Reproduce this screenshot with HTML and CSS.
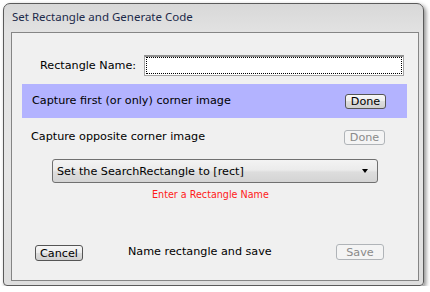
FILE: index.html
```html
<!DOCTYPE html>
<html lang="en">
<head>
    <meta charset="UTF-8">
    <title>Set Rectangle and Generate Code</title>
    <link rel="stylesheet" href="styles.css">
</head>
<body>
    <div class="window">
        <div class="title-bar">Set Rectangle and Generate Code</div>

        <div class="panel">
            <div class="name-row">
                <label for="rect-name">Rectangle Name:</label>
                <input type="text" id="rect-name" class="name-input">
            </div>

            <div class="step-row current">
                <span>Capture first (or only) corner image</span>
                <button class="btn">Done</button>
            </div>

            <div class="step-row">
                <span>Capture opposite corner image</span>
                <button class="btn" disabled>Done</button>
            </div>

            <div class="combo">
                <span>Set the SearchRectangle to [rect]</span>
                <span class="combo-arrow"></span>
            </div>

            <div class="error-msg">Enter a Rectangle Name</div>

            <div class="bottom-row">
                <button class="btn cancel-btn">Cancel</button>
                <span class="save-label">Name rectangle and save</span>
                <button class="btn save-btn" disabled>Save</button>
            </div>
        </div>
    </div>
</body>
</html>
```

FILE: styles.css
```css
* {
    margin: 0;
    padding: 0;
    box-sizing: border-box;
}

body {
    background: white;
    font-family: 'DejaVu Sans', sans-serif;
    font-size: 11.2px;
    color: black;
}

.window {
    margin: 3px 0 0 3px;
    width: 421px;
    height: 283px;
    border: 1px solid #5a5a5a;
    border-radius: 7px 7px 4px 4px;
    background: linear-gradient(to bottom, #d8d8d8, #e2e2e2 28px, #e6e6e6 60%, #dedede);
    box-shadow: 2px 2px 4px rgba(0, 0, 0, 0.45);
    display: flex;
    flex-direction: column;
}

.title-bar {
    height: 28px;
    padding: 5px 0 0 8px;
    font-family: 'Noto Sans', sans-serif;
    font-size: 11.5px;
    line-height: 16px;
    color: #1c2a4a;
}

.panel {
    margin: 0 4px 4px 7px;
    flex: 1;
    border: 1px solid #858585;
    background: #f0f0f0;
    padding-top: 22px;
    display: flex;
    flex-direction: column;
}

.name-row {
    display: flex;
    align-items: center;
    height: 21px;
    padding-left: 28px;
    gap: 8px;
}

.name-input {
    width: 260px;
    height: 21px;
    border: 1px solid #a4a4a4;
    border-top: 2px solid #8f8f8f;
    background: white;
    outline: 1px dotted #000;
    outline-offset: -3px;
    font-family: 'DejaVu Sans', sans-serif;
    font-size: 11.2px;
}

.step-row {
    display: flex;
    align-items: center;
    justify-content: space-between;
    margin: 12px 11px 0 10px;
    height: 15px;
    padding: 0 22px 0 9px;
}

.step-row span {
    margin-top: -3px;
}

.step-row.current {
    margin-top: 8px;
    height: 34px;
    padding: 0 21px 0 10px;
    background: #b3b3ff;
}

.step-row.current span {
    margin-top: -1px;
}

.btn {
    width: 41px;
    height: 15px;
    border: 1px solid #555;
    border-radius: 3px;
    background: linear-gradient(to bottom, #f6f6f6, #ececec 50%, #dddddd 50%, #d0d0d0);
    font-family: 'DejaVu Sans', sans-serif;
    font-size: 11.2px;
    line-height: 13px;
    color: black;
}

.btn:disabled {
    border-color: #b0b4b8;
    background: #f4f4f4;
    color: #8a8a8a;
}

.combo {
    margin: 14px 0 0 40px;
    width: 326px;
    height: 24px;
    border: 1px solid #707070;
    border-radius: 3px;
    background: linear-gradient(to bottom, #f3f3f3, #ebebeb 45%, #dddddd 55%, #d4d4d4);
    display: flex;
    align-items: center;
    justify-content: space-between;
    padding: 0 9px 0 4px;
}

.combo-arrow {
    width: 0;
    height: 0;
    border-left: 3.5px solid transparent;
    border-right: 3.5px solid transparent;
    border-top: 4px solid black;
}

.error-msg {
    margin-top: 6px;
    padding-left: 140px;
    font-size: 9.6px;
    line-height: 12px;
    color: #ff1a1a;
}

.bottom-row {
    margin-top: auto;
    margin-bottom: 19px;
    height: 17px;
    display: flex;
    align-items: center;
    padding: 0 34px 0 23px;
}

.cancel-btn {
    width: 48px;
    align-self: flex-end;
    height: 16px;
}

.save-label {
    margin-left: 45px;
    margin-top: -3px;
}

.save-btn {
    margin-left: auto;
    width: 48px;
    height: 16px;
    align-self: flex-start;
}
```
